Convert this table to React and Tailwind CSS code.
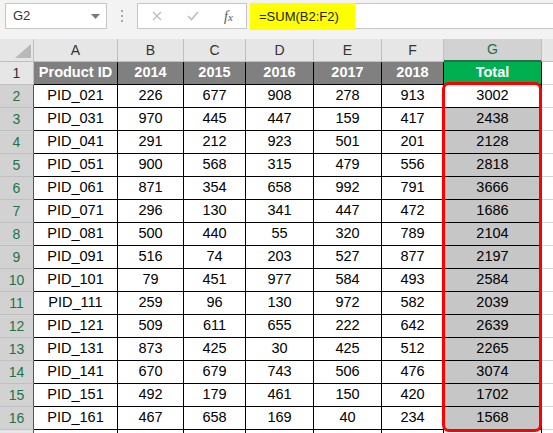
import React from "react";

const cols = [
  { key: "A", w: "w-[84px]" },
  { key: "B", w: "w-[66px]" },
  { key: "C", w: "w-[62px]" },
  { key: "D", w: "w-[68px]" },
  { key: "E", w: "w-[68px]" },
  { key: "F", w: "w-[62px]" },
  { key: "G", w: "w-[98px]" },
];

const headers = ["Product ID", "2014", "2015", "2016", "2017", "2018"];

const rows = [
  ["PID_021", 226, 677, 908, 278, 913, 3002],
  ["PID_031", 970, 445, 447, 159, 417, 2438],
  ["PID_041", 291, 212, 923, 501, 201, 2128],
  ["PID_051", 900, 568, 315, 479, 556, 2818],
  ["PID_061", 871, 354, 658, 992, 791, 3666],
  ["PID_071", 296, 130, 341, 447, 472, 1686],
  ["PID_081", 500, 440, 55, 320, 789, 2104],
  ["PID_091", 516, 74, 203, 527, 877, 2197],
  ["PID_101", 79, 451, 977, 584, 493, 2584],
  ["PID_111", 259, 96, 130, 972, 582, 2039],
  ["PID_121", 509, 611, 655, 222, 642, 2639],
  ["PID_131", 873, 425, 30, 425, 512, 2265],
  ["PID_141", 670, 679, 743, 506, 476, 3074],
  ["PID_151", 492, 179, 461, 150, 420, 1702],
  ["PID_161", 467, 658, 169, 40, 234, 1568],
];

const Toolbar = () => (
  <div className="flex h-[39px] items-start pt-[3px]">
    {/* name box */}
    <div className="ml-[5px] flex h-[26px] w-[102px] items-center justify-between border border-[#c6c6c6] bg-white pl-[7px] pr-[6px]">
      <span className="text-[13px] text-[#333]">G2</span>
      <svg width="9" height="5" viewBox="0 0 9 5">
        <polygon points="0,0 9,0 4.5,5" fill="#7a7a7a" />
      </svg>
    </div>
    <div className="flex h-[26px] w-[30px] flex-col items-center justify-center gap-[3px]">
      <div className="h-[2px] w-[2px] bg-[#a8a8a8]" />
      <div className="h-[2px] w-[2px] bg-[#a8a8a8]" />
      <div className="h-[2px] w-[2px] bg-[#a8a8a8]" />
    </div>
    {/* cancel / enter / fx */}
    <div className="flex h-[26px] w-[110px] items-center border border-[#c6c6c6] bg-white">
      <svg className="ml-[14px]" width="10" height="10" viewBox="0 0 10 10">
        <path d="M1 1 L9 9 M9 1 L1 9" stroke="#bdbdbd" strokeWidth="1.4" />
      </svg>
      <svg className="ml-[25px]" width="12" height="10" viewBox="0 0 12 10">
        <path d="M1 5 L4.5 8.5 L11 1" stroke="#bdbdbd" strokeWidth="1.6" fill="none" />
      </svg>
      <span className="ml-[25px] font-['Liberation_Serif'] text-[14px] italic text-[#5a5a5a]">
        f<span className="text-[11px]">x</span>
      </span>
    </div>
    {/* formula field */}
    <div className="ml-[3px] flex h-[26px] flex-1 border-y border-[#c6c6c6] bg-white">
      <div className="-mt-px flex h-[27px] w-[105px] items-center bg-[#ffff00] pl-[9px]">
        <span className="text-[13px] text-[#222]">=SUM(B2:F2)</span>
      </div>
    </div>
  </div>
);

const ColHeader = () => (
  <div className="flex h-[23px]">
    <div className="relative w-[34px] border-r border-b border-[#bfbfbf] bg-[#e6e6e6]">
      <svg className="absolute bottom-[3px] right-[2px]" width="16" height="14" viewBox="0 0 16 14">
        <polygon points="16,0 16,14 0,14" fill="#b9b9b9" />
      </svg>
    </div>
    {cols.map((c) =>
      c.key === "G" ? (
        <div
          key={c.key}
          className={`${c.w} flex items-center justify-center border-r border-b-2 border-r-[#bfbfbf] border-b-[#217346] bg-[#d2d2d2] text-[14px] text-[#217346]`}
        >
          {c.key}
        </div>
      ) : (
        <div
          key={c.key}
          className={`${c.w} flex items-center justify-center border-r border-b border-[#bfbfbf] bg-[#e6e6e6] text-[14px] text-[#333]`}
        >
          {c.key}
        </div>
      )
    )}
    <div className="flex-1 border-b border-[#bfbfbf] bg-[#e6e6e6]" />
  </div>
);

const TitleRow = () => (
  <div className="flex h-[23px]">
    <div className="flex w-[34px] items-center justify-center border-r border-b border-[#bfbfbf] bg-[#e6e6e6] text-[14px] text-[#333]">
      1
    </div>
    {headers.map((h, i) => (
      <div
        key={h}
        className={`${cols[i].w} flex items-center justify-center border-r border-b border-black bg-[#808080] text-[14.5px] font-bold text-white`}
      >
        {h}
      </div>
    ))}
    <div className="flex w-[98px] items-center justify-center border-r border-b border-black bg-[#00b050] text-[14.5px] font-bold text-white">
      Total
    </div>
    <div className="flex-1 border-b border-[#d4d4d4] bg-white" />
  </div>
);

const DataRow = ({ n, row }) => (
  <div className="flex h-[23px]">
    <div className="flex w-[34px] items-center justify-center border-r border-b border-r-[#217346] border-b-[#bfbfbf] bg-[#d2d2d2] text-[14px] text-[#217346]">
      {n}
    </div>
    {row.map((v, i) => {
      const shaded = i === 6 && n > 2;
      return (
        <div
          key={i}
          className={`${cols[i].w} flex items-center justify-center border-r border-b border-black text-[14.5px] text-black ${
            shaded ? "bg-[#c6c6c6]" : "bg-white"
          }`}
        >
          {v}
        </div>
      );
    })}
    <div className="flex-1 border-b border-[#d4d4d4] bg-white" />
  </div>
);

export default function App() {
  return (
    <div className="relative h-[433px] w-[553px] overflow-hidden bg-[#f3f3f3] font-['Liberation_Sans',Arial,sans-serif]">
      <Toolbar />
      <ColHeader />
      <TitleRow />
      {rows.map((r, i) => (
        <DataRow key={r[0]} n={i + 2} row={r} />
      ))}
      <div className="flex h-[23px]">
        <div className="w-[34px] border-r border-r-[#217346] bg-[#e6e6e6]" />
        {cols.map((c) => (
          <div key={c.key} className={`${c.w} border-r border-black bg-white`} />
        ))}
        <div className="flex-1 bg-white" />
      </div>
      {/* red annotation around G2:G16 */}
      <div className="pointer-events-none absolute left-[442px] top-[82px] h-[350px] w-[100px] rounded-[7px] border-[3px] border-[#ff0000]" />
    </div>
  );
}
